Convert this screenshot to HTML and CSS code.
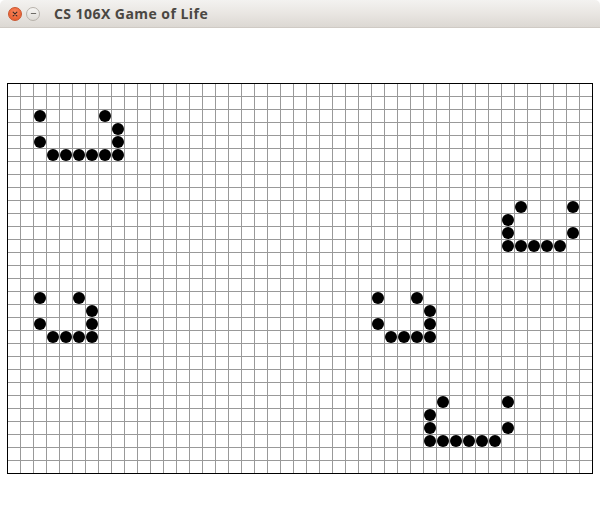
FILE: index.html
```html
<!DOCTYPE html>
<html>
<head>
<meta charset="utf-8">
<link rel="stylesheet" href="styles.css">
</head>
<body>
<div class="window">
  <header class="titlebar">
    <div class="controls">
      <span class="btn btn-close"><svg viewBox="0 0 8 8" width="6" height="6"><path d="M1.5 1.5 L6.5 6.5 M6.5 1.5 L1.5 6.5" stroke="#3a2a24" stroke-width="1.5" stroke-linecap="round"/></svg></span>
      <span class="btn btn-min"><svg viewBox="0 0 8 8" width="7" height="7"><path d="M1 4 H7" stroke="#6e6b66" stroke-width="1.2"/></svg></span>
    </div>
    <h1 class="title">CS 106X Game of Life</h1>
  </header>
  <main class="content">
    <div class="board" id="board"></div>
  </main>
</div>
<script src="script.js"></script>
</body>
</html>
```
FILE: styles.css
```css
* { box-sizing: border-box; }
html, body { margin: 0; padding: 0; background: #ffffff; }
body { width: 600px; height: 528px; overflow: hidden; }
.window { width: 600px; height: 528px; display: flex; flex-direction: column; background: #fff; }
.titlebar {
  height: 28px;
  flex: 0 0 28px;
  display: flex;
  align-items: center;
  background: linear-gradient(to bottom, #f3f2f0 0%, #e9e6e2 50%, #dcd8d3 100%);
  border-radius: 5px 5px 0 0;
  border-bottom: 1px solid #cfcac4;
}
.controls { display: flex; align-items: center; gap: 4px; padding-left: 8px; }
.btn {
  width: 14px; height: 14px; border-radius: 50%;
  display: flex; align-items: center; justify-content: center;
}
.btn-close {
  background: radial-gradient(circle at 50% 35%, #f8875f 0%, #ef6a3d 55%, #dd5628 100%);
  border: 1px solid #c9542d;
}
.btn-min {
  background: linear-gradient(to bottom, #f6f5f3, #dedbd6);
  border: 1px solid #b7b2ab;
}
.title {
  margin: 0 0 0 14px;
  font-family: "Open Sans", "DejaVu Sans", sans-serif;
  font-weight: 700;
  font-size: 14px;
  letter-spacing: 0.45px;
  color: #4a4742;
}
.content { flex: 1; padding: 55px 0 0 7px; }
.board {
  width: 586px;
  height: 391px;
  border: 1px solid #000;
  display: grid;
  grid-template-columns: repeat(45, 12px);
  grid-template-rows: repeat(30, 12px);
  gap: 1px;
  background-color: #fff;
  background-image:
    repeating-linear-gradient(to right, transparent 0 12px, #999 12px 13px),
    repeating-linear-gradient(to bottom, transparent 0 12px, #999 12px 13px);
}
.cell { width: 12px; height: 12px; border-radius: 50%; background: #000; }
```
FILE: script.js
```js
var live = [
  [2,2],[2,7],[3,8],[4,2],[4,8],[5,3],[5,4],[5,5],[5,6],[5,7],[5,8],
  [9,39],[9,43],[10,38],[11,38],[11,43],[12,38],[12,39],[12,40],[12,41],[12,42],
  [16,2],[16,5],[17,6],[18,2],[18,6],[19,3],[19,4],[19,5],[19,6],
  [16,28],[16,31],[17,32],[18,28],[18,32],[19,29],[19,30],[19,31],[19,32],
  [24,33],[24,38],[25,32],[26,32],[26,38],[27,32],[27,33],[27,34],[27,35],[27,36],[27,37]
];
var board = document.getElementById('board');
live.forEach(function (p) {
  var d = document.createElement('div');
  d.className = 'cell';
  d.style.gridRow = (p[0] + 1);
  d.style.gridColumn = (p[1] + 1);
  board.appendChild(d);
});
```
